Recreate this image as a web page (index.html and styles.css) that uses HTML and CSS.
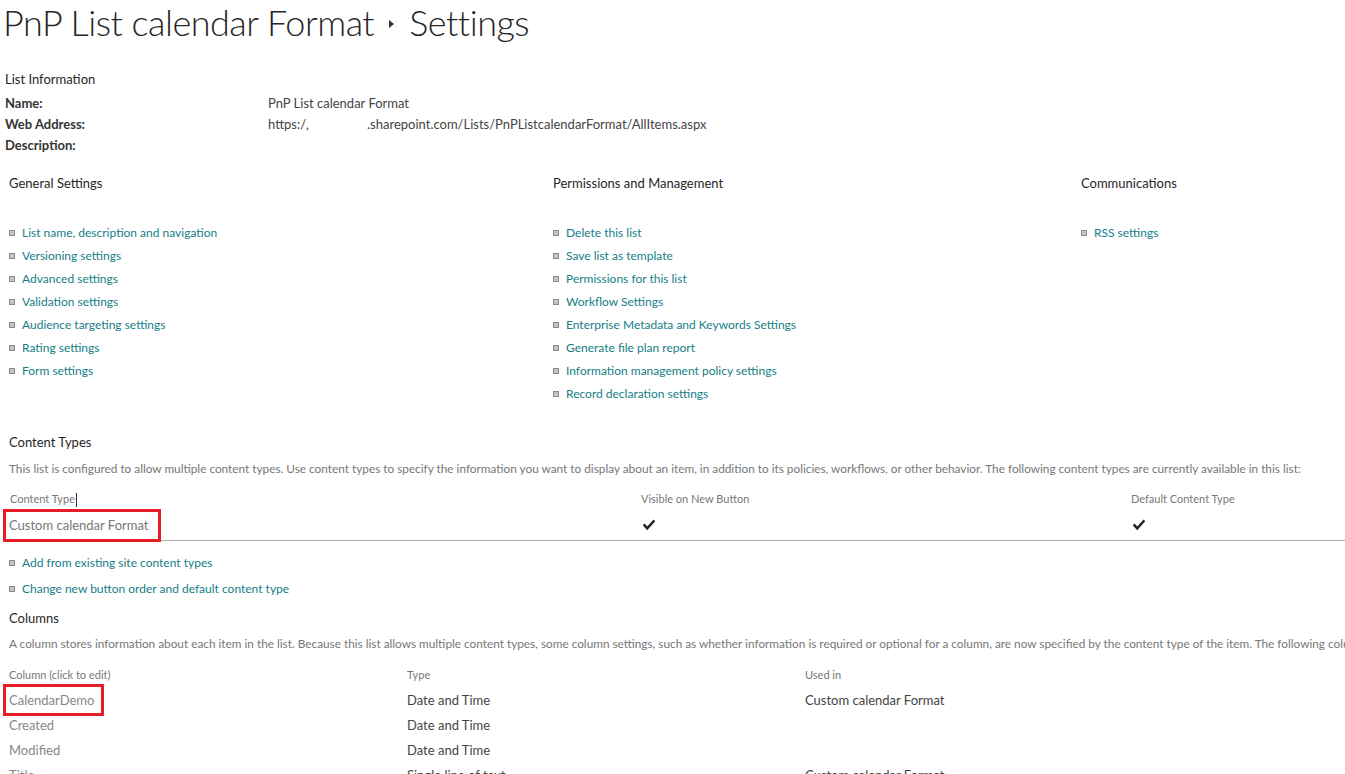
FILE: index.html
```html
<!DOCTYPE html>
<html lang="en">
<head>
<meta charset="utf-8">
<title>PnP List calendar Format - Settings</title>
<link rel="stylesheet" href="styles.css">
</head>
<body>
<div class="page">
  <h1 class="title"><span>PnP List calendar Format</span><span class="crumb-arrow"></span><span>Settings</span></h1>

  <div class="section-label info-label">List Information</div>
  <div class="info">
    <div class="info-key">Name:</div><div class="info-val">PnP List calendar Format</div>
    <div class="info-key">Web Address:</div><div class="info-val">https:/,<span class="redacted"></span>.sharepoint.com/Lists/PnPListcalendarFormat/AllItems.aspx</div>
    <div class="info-key">Description:</div><div class="info-val"></div>
  </div>

  <div class="settings">
    <div class="settings-col">
      <div class="section-label">General Settings</div>
      <ul class="links">
        <li><a href="#">List name, description and navigation</a></li>
        <li><a href="#">Versioning settings</a></li>
        <li><a href="#">Advanced settings</a></li>
        <li><a href="#">Validation settings</a></li>
        <li><a href="#">Audience targeting settings</a></li>
        <li><a href="#">Rating settings</a></li>
        <li><a href="#">Form settings</a></li>
      </ul>
    </div>
    <div class="settings-col">
      <div class="section-label">Permissions and Management</div>
      <ul class="links">
        <li><a href="#">Delete this list</a></li>
        <li><a href="#">Save list as template</a></li>
        <li><a href="#">Permissions for this list</a></li>
        <li><a href="#">Workflow Settings</a></li>
        <li><a href="#">Enterprise Metadata and Keywords Settings</a></li>
        <li><a href="#">Generate file plan report</a></li>
        <li><a href="#">Information management policy settings</a></li>
        <li><a href="#">Record declaration settings</a></li>
      </ul>
    </div>
    <div class="settings-col">
      <div class="section-label">Communications</div>
      <ul class="links">
        <li><a href="#">RSS settings</a></li>
      </ul>
    </div>
  </div>

  <div class="section-label ct-label">Content Types</div>
  <div class="desc ct-desc">This list is configured to allow multiple content types. Use content types to specify the information you want to display about an item, in addition to its policies, workflows, or other behavior. The following content types are currently available in this list:</div>

  <div class="ct-table">
    <div class="th">Content Type<span class="caret"></span></div>
    <div class="th">Visible on New Button</div>
    <div class="th">Default Content Type</div>
    <div class="td ct-name"><span class="highlight">Custom calendar Format</span></div>
    <div class="td"><svg class="check" viewBox="0 0 14 12" width="14" height="12"><path d="M0.8 6.2 L2.6 4.6 L5.2 7.6 L11.6 0.6 L13.2 2.2 L5.2 11.2 Z" fill="#222"/></svg></div>
    <div class="td"><svg class="check" viewBox="0 0 14 12" width="14" height="12"><path d="M0.8 6.2 L2.6 4.6 L5.2 7.6 L11.6 0.6 L13.2 2.2 L5.2 11.2 Z" fill="#222"/></svg></div>
  </div>

  <ul class="links ct-links">
    <li><a href="#">Add from existing site content types</a></li>
    <li><a href="#">Change new button order and default content type</a></li>
  </ul>

  <div class="section-label col-label">Columns</div>
  <div class="desc col-desc">A column stores information about each item in the list. Because this list allows multiple content types, some column settings, such as whether information is required or optional for a column, are now specified by the content type of the item. The following columns are currently available in this list:</div>

  <div class="col-table">
    <div class="th">Column (click to edit)</div>
    <div class="th">Type</div>
    <div class="th">Used in</div>

    <div class="td col-name"><span class="highlight">CalendarDemo</span></div>
    <div class="td">Date and Time</div>
    <div class="td">Custom calendar Format</div>

    <div class="td col-name">Created</div>
    <div class="td">Date and Time</div>
    <div class="td"></div>

    <div class="td col-name">Modified</div>
    <div class="td">Date and Time</div>
    <div class="td"></div>

    <div class="td col-name">Title</div>
    <div class="td">Single line of text</div>
    <div class="td">Custom calendar Format</div>
  </div>
</div>
</body>
</html>
```

FILE: styles.css
```css
html, body {
  margin: 0;
  padding: 0;
  background: #fff;
  overflow: hidden;
}

body {
  font-family: "Lato", "Open Sans", "Liberation Sans", sans-serif;
  font-size: 13px;
  color: #444;
  width: 1345px;
  height: 774px;
}

.page {
  padding-left: 3px;
}

.title {
  margin: 0;
  font-size: 36px;
  font-weight: 300;
  line-height: 44px;
  letter-spacing: -0.5px;
  color: #262626;
  white-space: nowrap;
  display: flex;
  align-items: center;
  gap: 15px;
}

.crumb-arrow {
  display: inline-block;
  width: 0;
  height: 0;
  border-top: 4px solid transparent;
  border-bottom: 4px solid transparent;
  border-left: 5px solid #333;
  margin-top: 4px;
}

.section-label {
  line-height: 20px;
  color: #262626;
  font-size: 13px;
}

.info-label {
  margin-top: 25px;
  padding-left: 2px;
}

.info {
  margin-top: 4px;
  display: grid;
  grid-template-columns: 263px 1fr;
  padding-left: 2px;
  line-height: 21px;
}

.info-key {
  font-weight: 700;
  color: #333;
}

.info-val {
  color: #444;
  white-space: nowrap;
}

.redacted {
  display: inline-block;
  width: 58px;
}

.settings {
  margin-top: 17px;
  display: grid;
  grid-template-columns: 544px 528px 1fr;
  padding-left: 6px;
}

.links {
  list-style: none;
  margin: 28px 0 0;
  padding: 0;
}

.links li {
  display: flex;
  align-items: center;
  line-height: 23px;
  font-size: 12px;
  white-space: nowrap;
}

.links li::before {
  content: "";
  width: 4px;
  height: 4px;
  background: #c4c4c4;
  border: 1px solid #8a8a8a;
  margin-right: 7px;
  flex: none;
}

.links a {
  color: #147e86;
  text-decoration: none;
}

.ct-label {
  margin-top: 27px;
  padding-left: 6px;
}

.desc {
  padding-left: 6px;
  line-height: 20px;
  font-size: 11.8px;
  color: #777;
  white-space: nowrap;
}

.ct-desc {
  margin-top: 7px;
}

.ct-table {
  margin-top: 10px;
  display: grid;
  grid-template-columns: 632px 490px 1fr;
}

.th {
  line-height: 20px;
  font-size: 11px;
  color: #777;
  padding-left: 6px;
  white-space: nowrap;
}

.ct-table .th:first-child {
  padding-left: 7px;
}

.caret {
  display: inline-block;
  width: 1px;
  height: 14px;
  background: #333;
  vertical-align: middle;
  margin-left: 1px;
}

.ct-table .td {
  padding: 6px 0 5px 6px;
  line-height: 20px;
  border-bottom: 1px solid #ababab;
  display: flex;
  align-items: center;
}

.ct-name {
  color: #777;
}

.check {
  display: block;
  margin-left: 1px;
}

.highlight {
  display: inline-block;
  border: 3px solid #e81c24;
  margin-left: -6px;
}

.ct-table .highlight {
  padding: 3px 10px 4px 3px;
  margin-top: -6px;
  margin-bottom: -7px;
  line-height: 20px;
  font-size: 13px;
}

.ct-links {
  margin-top: 9px;
  padding-left: 6px;
}

.ct-links li {
  line-height: 26px;
}

.col-label {
  margin-top: 6px;
  padding-left: 6px;
}

.col-desc {
  margin-top: 6px;
}

.col-table {
  margin-top: 11px;
  display: grid;
  grid-template-columns: 398px 398px 1fr;
}

.col-table .th {
  padding-bottom: 3px;
}

.col-table .td {
  line-height: 25px;
  padding-left: 6px;
  color: #444;
  white-space: nowrap;
}

.col-table .col-name {
  color: #888;
}

.col-table .highlight {
  padding: 2px 7px 2px 3px;
  margin-top: -4px;
  margin-bottom: -3px;
  line-height: 22px;
}
```
